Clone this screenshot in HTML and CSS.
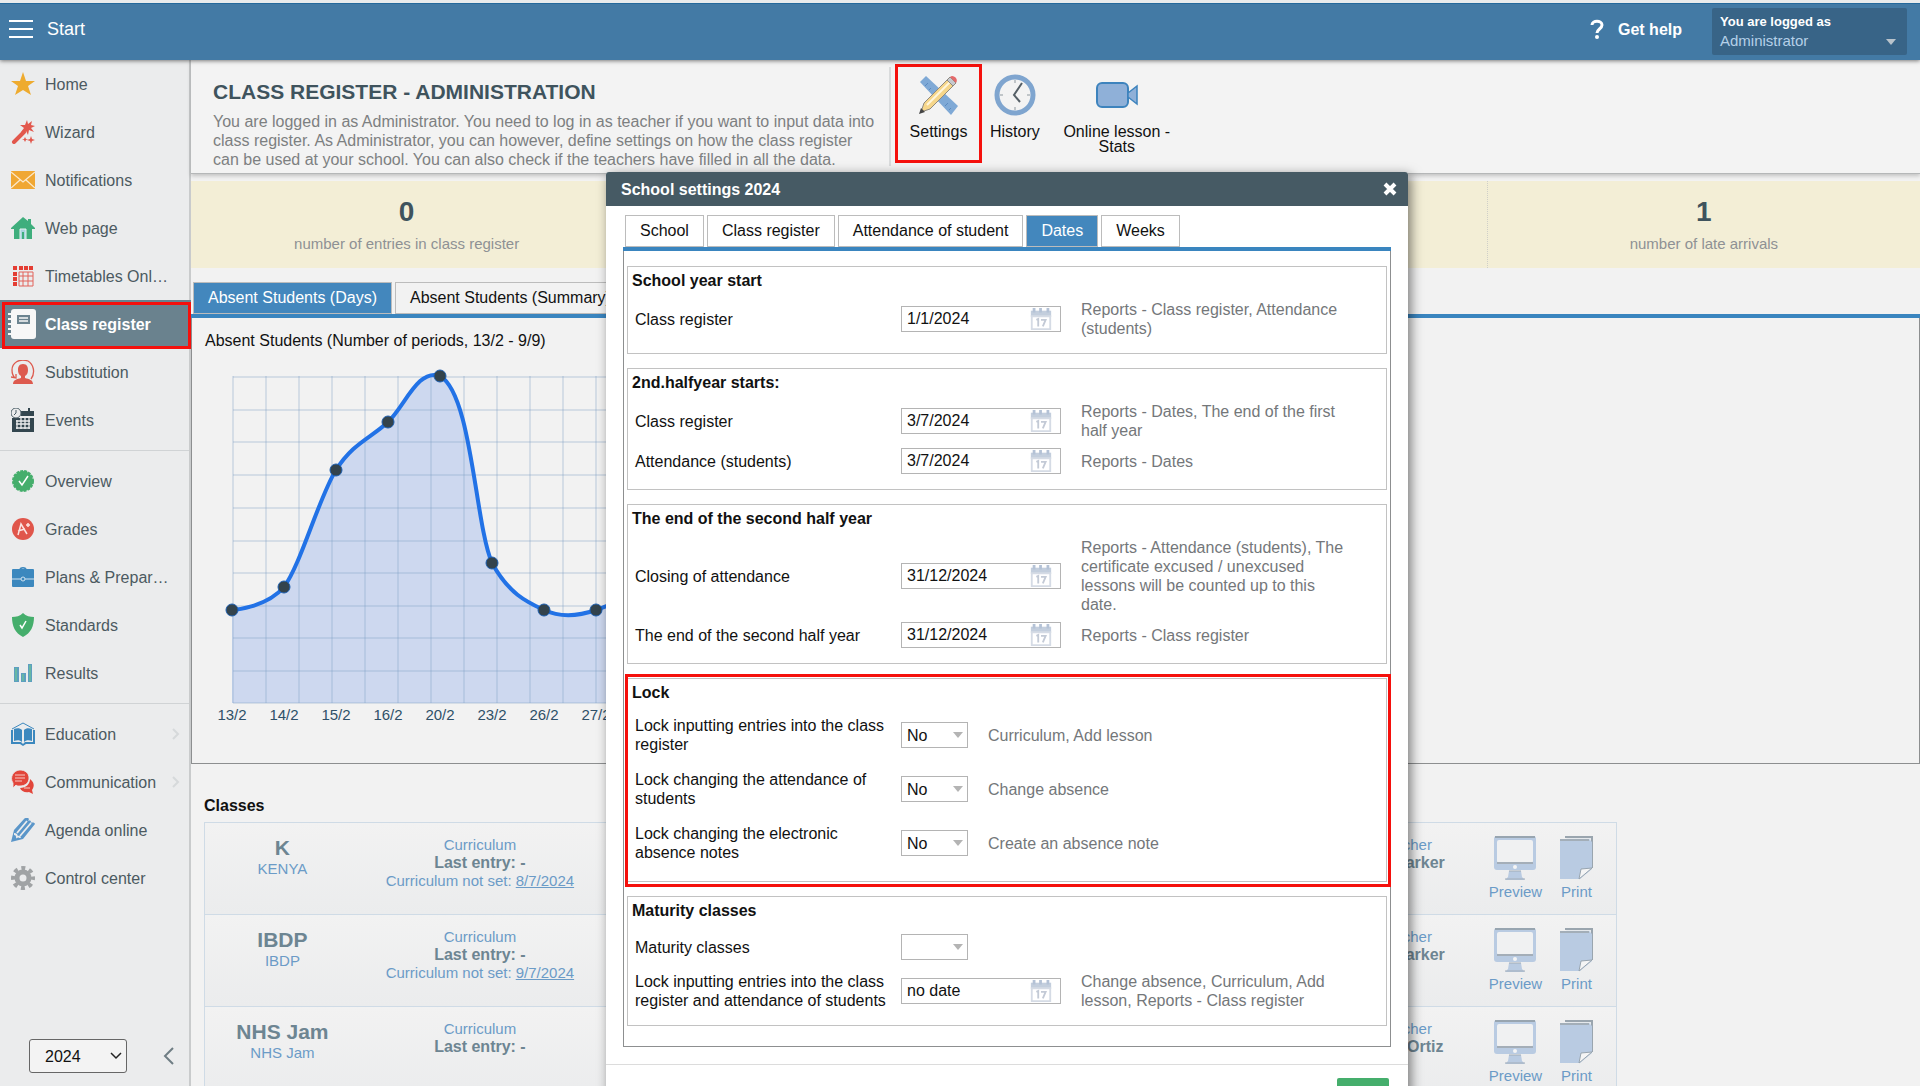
FILE: index.html
```html
<!DOCTYPE html>
<html lang="en">
<head>
  <meta charset="UTF-8">
  <meta name="viewport" content="width=device-width, initial-scale=1.0">
  <title>Class register - Administration</title>
  <link rel="stylesheet" href="styles.css">
</head>
<body>
  <!-- Shared icons -->
  <svg class="sprite" aria-hidden="true">
    <symbol id="calendar" viewBox="0 0 24 26">
      <path fill="#c3cedd" d="M1 4h22v7H1z"/>
      <path fill="#b4c2d6" d="M3 1h3v5H3zM10 1h3v5h-3zM18 1h3v5h-3z"/>
      <path fill="#fff" stroke="#d5dbe5" stroke-width="2" d="M2 10h20v14H2z"/>
      <path fill="none" stroke="#c3cad6" stroke-width="2" d="M7 14l2-1v8M12 14h5l-3 7"/>
    </symbol>
    <symbol id="monitor" viewBox="0 0 42 44">
      <rect width="42" height="34" rx="3" fill="#b9cbe2"/>
      <path d="M1 1h40" stroke="#98a5b0" stroke-width="2"/>
      <rect x="3" y="4" width="36" height="23" rx="2" fill="#f0f1f2"/>
      <path d="M3 27h36" stroke="#a4aeb8" stroke-width="2"/>
      <circle cx="21" cy="31" r="2" fill="#f5f5f5"/>
      <path d="M15 35h12l1 6 3 3H11l3-3z" fill="#b9cbe2"/>
      <path d="M15 35h12M11 43h20" stroke="#a2adb8"/>
    </symbol>
    <symbol id="sheets" viewBox="0 0 34 44">
      <path d="M6 1h27v31" fill="#e4e8ec" stroke="#9aa5ae" stroke-width="2"/>
      <path d="M1 3h29l3 3v27L21 43H1z" fill="#b9cbe2"/>
      <path d="M1 4h29" stroke="#a3aeb8" stroke-width="2"/>
      <path d="M20 43l2-10 11-1z" fill="#f5f5f5" stroke="#98a5b0"/>
    </symbol>
  </svg>

  <div class="app">
    <header class="topbar">
      <button class="menu-button" type="button">
        <svg width="24" height="20" viewBox="0 0 24 20"><path d="M0 2h24M0 10h24M0 18h24" stroke="#fff" stroke-width="2"/></svg>
        Start
      </button>
      <div class="topbar-right">
        <a class="help" href="#">
          <svg width="14" height="20" viewBox="0 0 14 20"><path d="M2 6c0-5 10-5 10 0 0 4-5 4-5 8" fill="none" stroke="#fff" stroke-width="3"/><circle cx="7" cy="18" r="2" fill="#fff"/></svg>
          Get help
        </a>
        <button class="user" type="button">
          <strong>You are logged as</strong>
          <span>Administrator</span>
        </button>
      </div>
    </header>

    <div class="layout">
      <nav class="sidebar">
        <a class="nav-item" href="#">
          <svg class="nav-icon" viewBox="0 0 24 24"><path fill="#eeab2f" d="M12 0l3 9h9l-7 5 3 9-8-5-8 5 3-9-7-5h9z"/></svg>
          Home
        </a>
        <a class="nav-item" href="#">
          <svg class="nav-icon" viewBox="0 0 24 24"><path stroke="#e2574c" stroke-width="4" stroke-linecap="round" d="M3 22L13 12"/><path fill="#e2574c" d="M16 0l1 4 4-3-1 4 4 1-4 2 3 4-5-2-1 5-2-4-5 1 3-4-4-3 5 0zM20 16l1 3 3 1-3 1-1 3-1-3-3-1 3-1zM14 17l1 2 2 0-2 1-1 2-1-2-2 0 2-1z"/></svg>
          Wizard
        </a>
        <a class="nav-item" href="#">
          <svg class="nav-icon" viewBox="0 0 24 24"><path fill="#f0a733" d="M0 3h24v18H0z"/><path fill="none" stroke="#fbe9cc" stroke-width="1.3" d="M0 4l12 10L24 4M0 20l9-8M24 20l-9-8"/></svg>
          Notifications
        </a>
        <a class="nav-item" href="#">
          <svg class="nav-icon" viewBox="0 0 24 24"><path fill="#3fae7d" d="M12 1l5 4V3h3v5l4 4v1h-3v10H3V13H0v-1z"/><path fill="#a9d3df" stroke="#e6f3ef" d="M9 23V13h6v10"/><path stroke="#3fae7d" stroke-width="2" d="M12 16v7"/></svg>
          Web page
        </a>
        <a class="nav-item" href="#">
          <svg class="nav-icon" viewBox="0 0 24 24"><path fill="#e43d33" d="M2 2h4v4H2zM8 2h4v4H8zM13 2h4v4h-4zM18 2h4v4h-4zM2 8h4v4H2zM2 13h4v4H2zM2 18h4v4H2z"/><path fill="none" stroke="#e2635b" d="M8 8h14v14H8zM12 8v14M17 8v14M8 12h14M8 17h14"/></svg>
          Timetables Onl…
        </a>
        <a class="nav-item active" href="#">
          <svg class="nav-icon large" viewBox="0 0 28 32"><rect x="3" y="1" width="25" height="30" rx="3" fill="#f7f7f7"/><path d="M0 6h5M0 11h5M0 16h5M0 21h5M0 26h5" stroke="#f7f7f7" stroke-width="2"/><path fill="#6c8490" d="M9 7h13v9H9z"/><path fill="none" stroke="#f7f7f7" stroke-width="1.5" d="M11 10h9M11 13h9"/></svg>
          Class register
        </a>
        <a class="nav-item" href="#">
          <svg class="nav-icon" viewBox="0 0 24 24"><path fill="#dd5a4e" d="M12 4c4 0 5 3 5 6s-1 5-3 6v2c4 1 8 2 8 6H2c0-4 4-5 8-6v-2c-2-1-3-3-3-6s1-6 5-6z"/><path fill="none" stroke="#dd5a4e" stroke-width="1.3" d="M20 19C25 12 22 4 17 1 8-2 1 3 1 10c0 3 1 6 3 8M0 17l5 1v-4"/></svg>
          Substitution
        </a>
        <a class="nav-item" href="#">
          <svg class="nav-icon" viewBox="0 0 24 24"><path fill="#33464f" d="M1 10h22v14H1zM10 3h13v5H10zM17 0h2v4h-2z"/><path stroke="#ebeced" stroke-width="1.3" fill="none" d="M5 13h14M5 16h14M5 20h14M6 12v9M10 9v12M14 9v12M18 9v12"/><circle cx="5" cy="5" r="5" fill="#ebeced" stroke="#4b5d66"/><path d="M5 2v3L3 7" stroke="#4b5d66" fill="none"/></svg>
          Events
        </a>
        <hr>
        <a class="nav-item" href="#">
          <svg class="nav-icon" viewBox="0 0 24 24"><circle cx="12" cy="12" r="10" fill="#45ae6c" stroke="#45ae6c" stroke-width="2" stroke-dasharray="3 1"/><path d="M8 12l3 4 6-9" fill="none" stroke="#fff" stroke-width="1.5"/></svg>
          Overview
        </a>
        <a class="nav-item" href="#">
          <svg class="nav-icon" viewBox="0 0 24 24"><circle cx="12" cy="12" r="11" fill="#e0564b"/><path d="M7 18L10 7l6 10M7 14l7-2M15 8h4M17 6v4" fill="none" stroke="#fbe3e1" stroke-width="1.5"/></svg>
          Grades
        </a>
        <a class="nav-item" href="#">
          <svg class="nav-icon" viewBox="0 0 24 24"><path fill="none" stroke="#3c88be" stroke-width="1.5" d="M9 5c0-3 6-3 6 0"/><rect x="1" y="4" width="22" height="18" rx="1" fill="#3c88be"/><path d="M1 14h22" stroke="#cfe2f0"/><circle cx="12" cy="14" r="2" fill="#3c88be" stroke="#cfe2f0"/></svg>
          Plans &amp; Prepar…
        </a>
        <a class="nav-item" href="#">
          <svg class="nav-icon" viewBox="0 0 24 24"><path fill="#45ae6c" d="M12 0c3 3 7 4 11 4 0 9-3 16-11 20C4 20 1 13 1 4c4 0 8-1 11-4z"/><path d="M9 12l2 3 4-7" fill="none" stroke="#fff" stroke-width="1.5"/></svg>
          Standards
        </a>
        <a class="nav-item" href="#">
          <svg class="nav-icon" viewBox="0 0 24 24"><path fill="#5d9fc0" d="M3 6h5v15H3zM10 12h5v9h-5zM17 3h4v18h-4z"/><path stroke="#6bc09a" stroke-width="1.5" d="M5 7v13M12 13v7M19 4v16"/></svg>
          Results
        </a>
        <hr>
        <a class="nav-item" href="#">
          <svg class="nav-icon" viewBox="0 0 24 24"><path fill="none" stroke="#3c88be" d="M1 7L12 1l11 6"/><path fill="#3c88be" d="M0 8h2v12H0zM22 8h2v12h-2zM3 7c3-1 6-1 8 1v12c-2-2-5-2-8-1zM21 7c-3-1-6-1-8 1v12c2-2 5-2 8-1zM0 20h10l2 2 2-2h10v2H15l-3 2-3-2H0z"/></svg>
          Education
          <svg class="nav-arrow" viewBox="0 0 8 12"><path d="M1 1l5 5-5 5" fill="none" stroke="#d6d9db" stroke-width="2"/></svg>
        </a>
        <a class="nav-item" href="#">
          <svg class="nav-icon" viewBox="0 0 24 24"><path fill="#e2463b" d="M19 9c4 3 5 7 2 11l1 4-4-2c-4 1-8-1-9-4 6 0 10-4 10-9z"/><path fill="#e2463b" stroke="#ebeced" stroke-width=".8" d="M9 0c5 0 9 3 9 8s-4 8-9 8c-2 0-3 0-4-1l-3 3v-5C-2 7 3 0 9 0z"/><path stroke="#f7c9c5" d="M4 5h10M4 8h10M4 11h7M13 18h6" fill="none"/></svg>
          Communication
          <svg class="nav-arrow" viewBox="0 0 8 12"><path d="M1 1l5 5-5 5" fill="none" stroke="#d6d9db" stroke-width="2"/></svg>
        </a>
        <a class="nav-item" href="#">
          <svg class="nav-icon" viewBox="0 0 24 24"><path d="M0 24l3-12L13 1c2-2 5-1 5 0l-1 2c2-1 3 0 3 1l-1 1c3-1 5 0 5 1L12 21z" fill="#5b96c9"/><path d="M6 15L16 3M9 18L20 5M3 16c2 0 3 1 3 3 2-1 3 0 3 1" fill="none" stroke="#ebeced" stroke-width="1.8"/></svg>
          Agenda online
        </a>
        <a class="nav-item" href="#">
          <svg class="nav-icon" viewBox="0 0 24 24"><circle cx="12" cy="12" r="10" fill="none" stroke="#a0a3a5" stroke-width="4" stroke-dasharray="4 3.854" stroke-dashoffset="2"/><circle cx="12" cy="12" r="6" fill="none" stroke="#a0a3a5" stroke-width="5"/></svg>
          Control center
        </a>
        <div class="sidebar-footer">
          <div class="year">
            <select aria-label="School year"><option>2024</option></select>
            <svg width="12" height="8" viewBox="0 0 12 8"><path d="M1 1l5 5 5-5" fill="none" stroke="#222" stroke-width="1.5"/></svg>
          </div>
          <button class="collapse" type="button" aria-label="Collapse menu">
            <svg width="12" height="18" viewBox="0 0 12 18"><path d="M10 1L2 9l8 8" fill="none" stroke="#6f7d84" stroke-width="2"/></svg>
          </button>
        </div>
      </nav>

      <main class="content">
        <section class="module-header">
          <div class="module-info">
            <h1>CLASS REGISTER - ADMINISTRATION</h1>
            <p>You are logged in as Administrator. You need to log in as teacher if you want to input data into class register. As Administrator, you can however, define settings on how the class register can be used at your school. You can also check if the teachers have filled in all the data.</p>
          </div>
          <div class="module-tools">
            <button class="tool marked" type="button">
              <svg width="42" height="42" viewBox="0 0 42 42">
                <path fill="#7fa9d6" d="M2 8l6-6 32 30-7 9z"/>
                <path stroke="#5b8abf" d="M7 12l3-3M11 16l2-2M15 20l3-3M27 32l3-3M31 36l2-2"/>
                <path fill="#f6d68a" stroke="#8f8a80" d="M3 38l3-9L31 4l6 6-25 25z"/>
                <path stroke="#fff6dc" stroke-width="2" d="M9 31L32 8"/>
                <path fill="#c5c9cf" stroke="#8f8a80" d="M29 6l3-3 6 6-3 3z"/>
                <path fill="#e4696a" d="M32 3c3-3 9 2 6 6z"/>
                <path fill="#444" d="M1 40l2-6 4 4z"/>
              </svg>
              Settings
            </button>
            <button class="tool" type="button">
              <svg width="42" height="42" viewBox="0 0 42 42">
                <circle cx="21" cy="21" r="18" fill="#f3f3f3" stroke="#7fa5cf" stroke-width="5"/>
                <path fill="none" stroke="#555f66" stroke-width="2" d="M28 9l-8 12 6 7"/>
                <path stroke="#8d979d" d="M21 6v3M21 33v3M6 21h3M33 21h3"/>
              </svg>
              History
            </button>
            <button class="tool wide" type="button">
              <svg width="42" height="42" viewBox="0 0 42 42">
                <rect x="1" y="9" width="31" height="24" rx="5" fill="#8fb0d8" stroke="#3d83bd" stroke-width="2"/>
                <path fill="#8fb0d8" stroke="#3d83bd" stroke-width="1.5" d="M32 19l9-7v18l-9-7z"/>
              </svg>
              Online lesson - Stats
            </button>
          </div>
        </section>

        <section class="stats">
          <div class="stat"><strong>0</strong><span>number of entries in class register</span></div>
          <div class="stat"></div>
          <div class="stat"></div>
          <div class="stat"><strong>1</strong><span>number of late arrivals</span></div>
        </section>

        <div class="tabs page-tabs">
          <button class="tab active" type="button">Absent Students (Days)</button>
          <button class="tab" type="button">Absent Students (Summary)</button>
        </div>
        <section class="chart-panel">
          <div class="chart-title">Absent Students (Number of periods, 13/2 - 9/9)</div>
          <svg class="chart" width="430" height="366" viewBox="0 0 430 366">
            <path d="M40 246C40 246 74 244 92 223C109 200 127 133 144 106C161 79 179 74 196 58C213 42 226 4 248 12C280 30 283 160 300 199C317 230 335 238 352 246C369 254 387 252 404 246L430 236V339H40z" fill="#cdd8ef"/>
            <path d="M41 12V339M74 12V339M107 12V339M140 12V339M173 12V339M206 12V339M239 12V339M272 12V339M305 12V339M338 12V339M371 12V339M404 12V339M41 13H430M41 46H430M41 78H430M41 111H430M41 144H430M41 177H430M41 209H430M41 242H430M41 274H430M41 307H430M41 339H430" fill="none" stroke="#7fa0c6" stroke-opacity=".5"/>
            <path d="M40 246C40 246 74 244 92 223C109 200 127 133 144 106C161 79 179 74 196 58C213 42 226 4 248 12C280 30 283 160 300 199C317 230 335 238 352 246C369 254 387 252 404 246L430 236" fill="none" stroke="#2272e6" stroke-width="4"/>
            <g fill="#33434c" stroke="#1f5fae">
              <circle cx="40" cy="246" r="6"/>
              <circle cx="92" cy="223" r="6"/>
              <circle cx="144" cy="106" r="6"/>
              <circle cx="196" cy="58" r="6"/>
              <circle cx="248" cy="12" r="6"/>
              <circle cx="300" cy="199" r="6"/>
              <circle cx="352" cy="246" r="6"/>
              <circle cx="404" cy="246" r="6"/>
            </g>
            <g class="chart-labels">
              <text x="40" y="356">13/2</text>
              <text x="92" y="356">14/2</text>
              <text x="144" y="356">15/2</text>
              <text x="196" y="356">16/2</text>
              <text x="248" y="356">20/2</text>
              <text x="300" y="356">23/2</text>
              <text x="352" y="356">26/2</text>
              <text x="404" y="356">27/2</text>
            </g>
          </svg>
        </section>

        <section class="classes">
          <h2>Classes</h2>
          <table>
            <tr>
              <td class="class-name"><strong>K</strong><a href="#">KENYA</a></td>
              <td class="curriculum"><a href="#">Curriculum</a><b>Last entry: -</b><span>Curriculum not set: <a class="date" href="#">8/7/2024</a></span></td>
              <td></td>
              <td class="teacher"><a href="#">Class teacher</a><b>Stephen Parker</b></td>
              <td class="actions"><div><a href="#"><svg width="42" height="44"><use href="#monitor"/></svg>Preview</a><a href="#"><svg width="34" height="44"><use href="#sheets"/></svg>Print</a></div></td>
            </tr>
            <tr>
              <td class="class-name"><strong>IBDP</strong><a href="#">IBDP</a></td>
              <td class="curriculum"><a href="#">Curriculum</a><b>Last entry: -</b><span>Curriculum not set: <a class="date" href="#">9/7/2024</a></span></td>
              <td></td>
              <td class="teacher"><a href="#">Class teacher</a><b>Stephen Parker</b></td>
              <td class="actions"><div><a href="#"><svg width="42" height="44"><use href="#monitor"/></svg>Preview</a><a href="#"><svg width="34" height="44"><use href="#sheets"/></svg>Print</a></div></td>
            </tr>
            <tr>
              <td class="class-name"><strong>NHS Jam</strong><a href="#">NHS Jam</a></td>
              <td class="curriculum"><a href="#">Curriculum</a><b>Last entry: -</b></td>
              <td></td>
              <td class="teacher"><a href="#">Class teacher</a><b>Alejandro Ortiz</b></td>
              <td class="actions"><div><a href="#"><svg width="42" height="44"><use href="#monitor"/></svg>Preview</a><a href="#"><svg width="34" height="44"><use href="#sheets"/></svg>Print</a></div></td>
            </tr>
          </table>
        </section>
      </main>
    </div>

    <!-- School settings dialog -->
    <div class="dialog" role="dialog" aria-labelledby="dialogTitle">
      <div class="dialog-header">
        <h2 id="dialogTitle">School settings 2024</h2>
        <button class="close" type="button" aria-label="Close">
          <svg width="14" height="14" viewBox="0 0 14 14"><path d="M2 2l10 10M12 2L2 12" stroke="#fff" stroke-width="4"/></svg>
        </button>
      </div>
      <div class="dialog-body">
        <div class="tabs">
          <button class="tab" type="button">School</button>
          <button class="tab" type="button">Class register</button>
          <button class="tab" type="button">Attendance of student</button>
          <button class="tab active" type="button">Dates</button>
          <button class="tab" type="button">Weeks</button>
        </div>
        <form class="panel">
          <section class="group">
            <h3>School year start</h3>
            <div class="row">
              <label for="yearStart">Class register</label>
              <div class="date-box"><input id="yearStart" type="text" value="1/1/2024"><svg><use href="#calendar"/></svg></div>
              <p>Reports - Class register, Attendance (students)</p>
            </div>
          </section>

          <section class="group">
            <h3>2nd.halfyear starts:</h3>
            <div class="row">
              <label for="halfRegister">Class register</label>
              <div class="date-box"><input id="halfRegister" type="text" value="3/7/2024"><svg><use href="#calendar"/></svg></div>
              <p>Reports - Dates, The end of the first half year</p>
            </div>
            <div class="row">
              <label for="halfAttendance">Attendance (students)</label>
              <div class="date-box"><input id="halfAttendance" type="text" value="3/7/2024"><svg><use href="#calendar"/></svg></div>
              <p>Reports - Dates</p>
            </div>
          </section>

          <section class="group">
            <h3>The end of the second half year</h3>
            <div class="row">
              <label for="closing">Closing of attendance</label>
              <div class="date-box"><input id="closing" type="text" value="31/12/2024"><svg><use href="#calendar"/></svg></div>
              <p>Reports - Attendance (students), The certificate excused / unexcused lessons will be counted up to this date.</p>
            </div>
            <div class="row">
              <label for="secondEnd">The end of the second half year</label>
              <div class="date-box"><input id="secondEnd" type="text" value="31/12/2024"><svg><use href="#calendar"/></svg></div>
              <p>Reports - Class register</p>
            </div>
          </section>

          <section class="group marked">
            <h3>Lock</h3>
            <div class="row choice">
              <label for="lockEntries">Lock inputting entries into the class register</label>
              <div class="select-box"><select id="lockEntries"><option>No</option></select></div>
              <p>Curriculum, Add lesson</p>
            </div>
            <div class="row choice">
              <label for="lockAttendance">Lock changing the attendance of students</label>
              <div class="select-box"><select id="lockAttendance"><option>No</option></select></div>
              <p>Change absence</p>
            </div>
            <div class="row choice">
              <label for="lockNotes">Lock changing the electronic absence notes</label>
              <div class="select-box"><select id="lockNotes"><option>No</option></select></div>
              <p>Create an absence note</p>
            </div>
          </section>

          <section class="group">
            <h3>Maturity classes</h3>
            <div class="row choice">
              <label for="maturity">Maturity classes</label>
              <div class="select-box"><select id="maturity"><option></option></select></div>
            </div>
            <div class="row">
              <label for="maturityLock">Lock inputting entries into the class register and attendance of students</label>
              <div class="date-box"><input id="maturityLock" type="text" value="no date"><svg><use href="#calendar"/></svg></div>
              <p>Change absence, Curriculum, Add lesson, Reports - Class register</p>
            </div>
          </section>
        </form>
      </div>
      <div class="dialog-footer">
        <button class="save" type="button" aria-label="Save"></button>
      </div>
    </div>
  </div>
</body>
</html>
```
FILE: styles.css
```css
* {
  box-sizing: border-box;
}

body {
  margin: 0;
  font-family: "Liberation Sans", Arial, sans-serif;
  font-size: 16px;
  line-height: 19px;
  color: #111;
  background: #f2f2f2;
}

button, select, input {
  font: inherit;
  color: inherit;
}
button {
  border: 0;
  padding: 0;
  background: none;
  cursor: pointer;
}
a {
  color: inherit;
  text-decoration: none;
}
h1, h2, h3, p {
  margin: 0;
}
h2, h3 {
  font-size: 16px;
}
.sprite {
  position: absolute;
  width: 0;
  height: 0;
}

.app {
  position: relative;
  display: flex;
  flex-direction: column;
  height: 100vh;
  overflow: hidden;
  border-top: 3px solid #e9ebec;
}

/* Top bar */
.topbar {
  position: relative;
  z-index: 1;
  display: flex;
  justify-content: space-between;
  align-items: flex-start;
  height: 57px;
  flex-shrink: 0;
  padding: 4px 13px 0 9px;
  color: #fff;
  background: #437aa5;
  border-top: 1px solid #24699c;
  box-shadow: 0 1px 4px rgba(0, 0, 0, 0.5);
}
.menu-button {
  display: flex;
  align-items: center;
  gap: 14px;
  height: 42px;
  font-size: 18px;
}
.topbar-right {
  display: flex;
  gap: 30px;
}
.help {
  display: flex;
  align-items: center;
  gap: 14px;
  height: 42px;
  font-weight: bold;
}
.user {
  position: relative;
  display: flex;
  flex-direction: column;
  width: 195px;
  height: 47px;
  padding: 4px 8px;
  text-align: left;
  background: #386487;
  border-radius: 2px;
}
.user strong {
  font-size: 13px;
}
.user span {
  font-size: 15px;
  color: #b5d0e8;
}
.user::after {
  content: "";
  position: absolute;
  right: 11px;
  bottom: 10px;
  border: 5px solid transparent;
  border-top: 6px solid #b9c3cb;
  border-bottom: 0;
}

.layout {
  display: flex;
  flex: 1;
  min-height: 0;
}

/* Sidebar */
.sidebar {
  display: flex;
  flex-direction: column;
  width: 191px;
  flex-shrink: 0;
  background: #ebeced;
  border-right: 2px solid #c9cbcc;
}
.sidebar hr {
  width: 100%;
  margin: 6px 0;
  border: 0;
  border-top: 1px solid #d0d3d5;
}
.nav-item {
  position: relative;
  display: flex;
  align-items: center;
  gap: 10px;
  height: 48px;
  flex-shrink: 0;
  padding: 0 9px 0 11px;
  color: #4c5a61;
  white-space: nowrap;
}
.nav-item.active {
  margin-right: -2px;
  color: #fff;
  font-weight: bold;
  background: #6a828e;
}
.nav-item.active::after {
  content: "";
  position: absolute;
  inset: 2px 0 -1px 2px;
  border: 3px solid #f5100c;
}
.nav-icon {
  width: 24px;
  height: 24px;
  flex-shrink: 0;
}
.nav-icon.large {
  width: 28px;
  height: 32px;
  margin: 0 -1px 0 -3px;
}
.nav-arrow {
  width: 8px;
  height: 12px;
  margin-left: auto;
}
.sidebar-footer {
  display: flex;
  align-items: center;
  justify-content: space-between;
  margin-top: auto;
  padding: 0 14px 13px 29px;
}
.year {
  position: relative;
}
.year select {
  width: 98px;
  height: 34px;
  padding: 0 15px;
  color: #111;
  background: #f3f3f3;
  border: 1px solid #666;
  border-radius: 3px;
  appearance: none;
}
.year svg {
  position: absolute;
  right: 5px;
  top: 13px;
  pointer-events: none;
}
.collapse {
  display: flex;
}

/* Page content */
.content {
  flex: 1;
  min-width: 0;
}
.module-header {
  display: flex;
  height: 114px;
  background: #f3f3f3;
  border-bottom: 1px solid #b5b7b8;
  box-shadow: 0 2px 4px rgba(0, 0, 0, 0.2);
}
.module-info {
  width: 700px;
  margin: 7px 0;
  padding: 14px 8px 0 22px;
  border-right: 2px solid #d9dbdc;
}
.module-info h1 {
  margin-bottom: 9px;
  font-size: 21px;
  line-height: 22px;
  color: #3f535d;
}
.module-info p {
  color: #7d8081;
}
.module-tools {
  display: flex;
  align-items: flex-start;
  gap: 8px;
  padding: 4px;
}
.tool {
  display: flex;
  flex-direction: column;
  align-items: center;
  gap: 8px;
  height: 99px;
  padding-top: 10px;
  line-height: 15px;
}
.tool.marked {
  width: 87px;
  padding-top: 7px;
  border: 3px solid #f5100c;
}
.tool.wide {
  width: 138px;
  padding-left: 8px;
  padding-right: 8px;
}

.stats {
  display: grid;
  grid-template-columns: repeat(4, 1fr);
  height: 87px;
  margin-top: 7px;
  background: #f3eed6;
}
.stat {
  display: flex;
  flex-direction: column;
  align-items: center;
  gap: 9px;
  padding-top: 18px;
  border-right: 1px dotted #cfcfc8;
}
.stat:last-child {
  border-right: 0;
}
.stat strong {
  font-size: 28px;
  line-height: 26px;
  color: #3f535d;
}
.stat span {
  font-size: 15px;
  color: #8e9194;
}

/* Tabs */
.tabs {
  display: flex;
  gap: 3px;
  padding: 0 2px;
  border-bottom: 4px solid #3a85bf;
}
.tab {
  height: 32px;
  padding: 0 14px 2px;
  border: 1px solid #bcbcbc;
}
.tab.active {
  color: #fff;
  background: #4387bd;
}
.page-tabs {
  margin-top: 14px;
}

.chart-panel {
  padding: 13px 0 33px;
  background: #f2f2f2;
  border: 1px solid #8d8f90;
  border-top: 0;
}
.chart-title {
  padding-left: 13px;
}
.chart {
  display: block;
  margin-top: 14px;
}
.chart-labels {
  font-size: 15px;
  fill: #2f5068;
  text-anchor: middle;
}

/* Classes table */
.classes {
  padding: 32px 13px 0;
}
.classes table {
  width: 83%;
  margin-top: 7px;
  border-collapse: collapse;
  border: 1px solid #cfdbe6;
}
.classes tr {
  height: 92px;
  background: linear-gradient(#f2f2f2, #ebeced);
  border-bottom: 1px solid #cfdbe6;
}
.classes td {
  padding: 13px 0 0;
  font-size: 15px;
  line-height: 18px;
  text-align: center;
  vertical-align: top;
  color: #6b9bc7;
}
.classes td > * {
  display: block;
}
.classes b {
  font-size: 16px;
  color: #6d8592;
}
.class-name {
  width: 11%;
}
.class-name strong {
  font-size: 21px;
  line-height: 24px;
  color: #6d8592;
}
.curriculum {
  width: 17%;
}
.curriculum .date {
  text-decoration: underline;
}
.teacher {
  width: 14%;
}
.actions {
  width: 132px;
}
.classes .actions div {
  display: flex;
}
.actions a {
  display: flex;
  flex-direction: column;
  align-items: center;
  gap: 3px;
  width: 61px;
}

/* Settings dialog */
.dialog {
  position: absolute;
  z-index: 2;
  top: 169px;
  left: 606px;
  width: 802px;
  background: #fff;
  border-radius: 3px 3px 0 0;
  box-shadow: 3px 3px 12px rgba(0, 0, 0, 0.5);
}
.dialog-header {
  display: flex;
  align-items: center;
  justify-content: space-between;
  height: 34px;
  padding: 0 11px 0 15px;
  color: #fff;
  background: #465a64;
  border-radius: 3px 3px 0 0;
}
.close {
  display: flex;
}
.dialog-body {
  padding: 9px 17px 17px;
}
.panel {
  display: flex;
  flex-direction: column;
  gap: 14px;
  padding: 15px 3px 20px;
  border: 1px solid #8d8f90;
  border-top: 0;
}
.group {
  position: relative;
  padding: 4px 0 11px;
  border: 1px solid #c2c2c2;
}
.group h3 {
  margin: 0 0 6px 4px;
}
.group.marked::after {
  content: "";
  position: absolute;
  inset: -5px -5px -6px -3px;
  border: 3px solid #f5100c;
  pointer-events: none;
}
.row {
  display: flex;
  align-items: center;
  padding: 4px 0 4px 7px;
}
.row.choice {
  padding-top: 8px;
  padding-bottom: 8px;
}
.row label {
  width: 266px;
  padding-right: 12px;
}
.row p {
  max-width: 292px;
  padding-left: 20px;
  color: #74777a;
}
.date-box, .select-box {
  position: relative;
}
.date-box input, .select-box select {
  display: block;
  height: 26px;
  padding: 0 5px;
  background: #fff;
  border: 1px solid #b4b4b4;
  border-radius: 0;
  appearance: none;
}
.date-box input {
  width: 160px;
}
.date-box svg {
  position: absolute;
  top: 1px;
  right: 8px;
  width: 24px;
  height: 24px;
}
.select-box select {
  width: 67px;
}
.select-box::after {
  content: "";
  position: absolute;
  top: 10px;
  right: 5px;
  border: 5px solid transparent;
  border-top: 6px solid #b4b4b4;
  border-bottom: 0;
  pointer-events: none;
}
.dialog-footer {
  display: flex;
  justify-content: flex-end;
  padding: 13px 19px;
  border-top: 1px solid #dcdcdc;
}
.save {
  width: 52px;
  height: 34px;
  background: #45ae6c;
  border-radius: 2px;
}
```
